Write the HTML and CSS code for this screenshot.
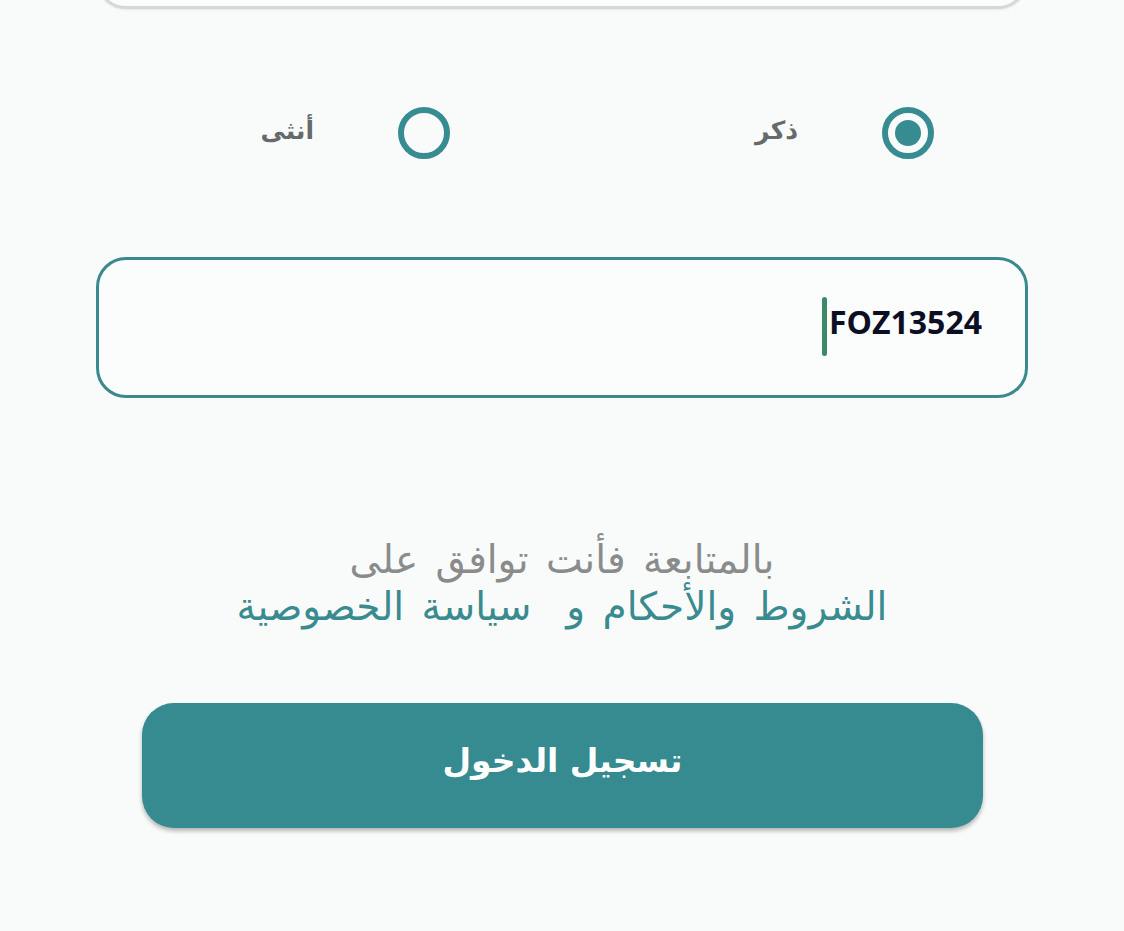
FILE: index.html
```html
<!DOCTYPE html>
<html lang="ar" dir="rtl">
<head>
<meta charset="utf-8">
<title>تسجيل</title>
<link rel="stylesheet" href="styles.css">
</head>
<body>
<div class="page">
  <div class="field field-prev"></div>

  <div class="gender-row">
    <label class="option">
      <span class="radio radio-on"><span class="dot"></span></span>
      <span class="option-label">ذكر</span>
    </label>
    <label class="option">
      <span class="radio"></span>
      <span class="option-label">أنثى</span>
    </label>
  </div>

  <div class="field field-active">
    <span class="field-value">FOZ13524</span>
    <span class="caret"></span>
  </div>

  <div class="terms">
    <div class="terms-line">بالمتابعة فأنت توافق على</div>
    <div class="terms-links"><span>الشروط والأحكام</span> و&nbsp; <span>سياسة الخصوصية</span></div>
  </div>

  <div class="btn-wrap">
    <button class="btn-primary">تسجيل الدخول</button>
  </div>
</div>
</body>
</html>
```

FILE: styles.css
```css
* { box-sizing: border-box; }

html, body {
  margin: 0;
  padding: 0;
  background: #f9fbfb;
}

body {
  font-family: "DejaVu Sans", "Noto Sans", sans-serif;
  width: 1124px;
  height: 931px;
  overflow: hidden;
}

.page {
  display: flex;
  flex-direction: column;
}

.field {
  margin: 0 96px;
  height: 141px;
  border-radius: 30px;
  background: #fbfcfc;
}

.field-prev {
  margin-top: -132px;
  border: 3px solid #d6d8d8;
  box-shadow: 0 1px 2px rgba(0,0,0,0.08);
}

.gender-row {
  margin-top: 94px;
  height: 60px;
  display: grid;
  grid-template-columns: 484px 484px;
  padding-right: 190px;
}

.option {
  display: flex;
  align-items: center;
  gap: 84px;
}

.radio {
  width: 52px;
  height: 52px;
  border-radius: 50%;
  border: 6px solid #368c90;
  display: flex;
  align-items: center;
  justify-content: center;
  flex: none;
}

.dot {
  width: 26px;
  height: 26px;
  border-radius: 50%;
  background: #368c90;
}

.option-label {
  font-size: 25px;
  font-weight: bold;
  color: #666a6a;
  margin-top: -6px;
}

.field-active {
  margin-top: 94px;
  border: 3px solid #3a898e;
  display: flex;
  align-items: center;
  padding-right: 43px;
}

.field-value {
  direction: ltr;
  font-family: "Open Sans", "Noto Sans", sans-serif;
  font-weight: bold;
  font-size: 32px;
  color: #0c0f24;
  margin-top: -12px;
}

.caret {
  width: 5px;
  height: 59px;
  border-radius: 3px;
  background: #3d8a6b;
  margin-right: 2px;
  margin-top: -3px;
}

.terms {
  margin-top: 138px;
  text-align: center;
  font-size: 39px;
  line-height: 47px;
  word-spacing: 5px;
}

.terms-line {
  color: #8a8c8c;
}

.terms-links {
  color: #3a8b8f;
  white-space: pre;
}

.btn-wrap {
  margin-top: 73px;
  padding: 0 141px 0 142px;
}

.btn-primary {
  width: 100%;
  height: 125px;
  border: none;
  border-radius: 32px;
  background: #358b8f;
  color: #ffffff;
  font-family: "DejaVu Sans", "Noto Sans", sans-serif;
  font-weight: bold;
  font-size: 33px;
  padding-bottom: 12px;
  box-shadow: 0 3px 4px rgba(0,0,0,0.28);
}
```
